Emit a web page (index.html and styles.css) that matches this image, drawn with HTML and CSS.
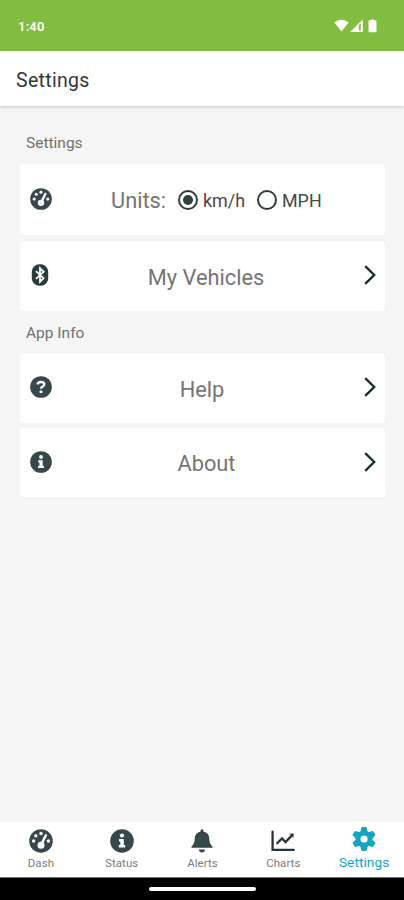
FILE: index.html
```html
<!DOCTYPE html>
<html lang="en">
<head>
<meta charset="utf-8">
<title>Settings</title>
<link rel="stylesheet" href="styles.css">
</head>
<body>
<svg class="defs" width="0" height="0" aria-hidden="true">
  <symbol id="gauge" viewBox="0 0 24 24">
    <circle cx="12" cy="12" r="11.8" fill="#37474a"/>
    <g fill="#fff"><circle cx="4.6" cy="12" r="1.7"/><circle cx="6.8" cy="6.8" r="1.7"/><circle cx="12" cy="4.5" r="1.7"/><circle cx="19.4" cy="12" r="1.7"/><circle cx="12" cy="16.2" r="3.5"/></g>
    <path d="M12 16 16.8 6.4" stroke="#fff" stroke-width="2.5" stroke-linecap="round"/>
  </symbol>
  <symbol id="info" viewBox="0 0 24 24">
    <circle cx="12" cy="12" r="11.8" fill="#37474a"/>
    <circle cx="12" cy="6.5" r="2.1" fill="#fff"/>
    <path d="M9 10h4.8v6H15.2v2.6H8.8V16h1.5v-3.4H9z" fill="#fff"/>
  </symbol>
  <symbol id="chevron" viewBox="0 0 12 20">
    <path d="M1.2 1.2 10.2 10 1.2 18.8" fill="none" stroke="#1c2f30" stroke-width="2.4"/>
  </symbol>
</svg>
<header class="status">
  <span class="time">1:40</span>
  <svg class="signals" width="44" height="14" viewBox="0 0 44 14" fill="#fff">
    <path d="M.4 3.5Q7.5-2 14.6 3.5L7.5 12.5z"/>
    <path fill-rule="evenodd" d="M16 13 28.8 .5V13zM24.8 6v5.5h2V4.5z"/>
    <path d="M37 1.3V.5h3v.8h1.5q1 0 1 1v10q0 1-1 1h-6q-1 0-1-1v-10q0-1 1-1z"/>
  </svg>
</header>
<div class="titlebar"><h1>Settings</h1></div>
<main>
  <h2>Settings</h2>
  <section class="card units">
    <svg class="lead" width="22" height="22"><use href="#gauge"/></svg>
    <div class="options">
      <span class="label">Units:</span>
      <span class="radio on"></span><span class="opt kmh">km/h</span>
      <span class="radio"></span><span class="opt mph">MPH</span>
    </div>
  </section>
  <section class="card vehicles">
    <svg class="lead" width="22" height="22" viewBox="0 0 22 22">
      <rect x="1.8" y=".2" width="16.4" height="21.6" rx="7.6" fill="#293b3d"/>
      <path d="M6 7.2 13.6 14.2 10 17.8V4.2L13.6 7.8 6 14.8" fill="none" stroke="#fff" stroke-width="1.8"/>
    </svg>
    <span class="label">My Vehicles</span>
    <svg class="go" width="12" height="20"><use href="#chevron"/></svg>
  </section>
  <h2 class="second">App Info</h2>
  <section class="card help">
    <svg class="lead" width="22" height="22" viewBox="0 0 24 24">
      <circle cx="12" cy="12" r="11.8" fill="#37474a"/>
      <path d="M8.7 9.2V7.7Q10 6.5 12.2 6.5q3.4 0 3.4 2.6 0 1.8-2 2.6-1.5.6-1.5 2.1" fill="none" stroke="#fff" stroke-width="2.7"/>
      <circle cx="12" cy="17.2" r="1.7" fill="#fff"/>
    </svg>
    <span class="label">Help</span>
    <svg class="go" width="12" height="20"><use href="#chevron"/></svg>
  </section>
  <section class="card about">
    <svg class="lead" width="22" height="22"><use href="#info"/></svg>
    <span class="label">About</span>
    <svg class="go" width="12" height="20"><use href="#chevron"/></svg>
  </section>
</main>
<nav>
  <a class="tab"><svg width="24" height="24"><use href="#gauge"/></svg><span class="dash">Dash</span></a>
  <a class="tab"><svg width="24" height="24"><use href="#info"/></svg><span class="stat">Status</span></a>
  <a class="tab"><svg width="24" height="24" viewBox="0 0 24 24" fill="#37474a"><path d="M10.6 1.6a1.4 1.4 0 0 1 2.8 0v.9q5.9 1.2 5.9 7.4 0 4.8 3.2 7.5v1.4h-21v-1.4q3.2-2.7 3.2-7.5 0-6.2 5.9-7.4zM9 20.5h6a3 3 0 0 1-6 0z"/></svg><span class="alerts">Alerts</span></a>
  <a class="tab"><svg width="24" height="24" viewBox="0 0 24 24" fill="none" stroke="#263638" stroke-width="2.3" stroke-linecap="round"><path d="M1.6 2.6v18.2H22.8M6.2 14.2 11 9.4l3.6 3.6L21.6 5.6"/><path d="M19 5.2h2.9v2.9" stroke-width="1"/></svg><span class="charts">Charts</span></a>
  <a class="tab active"><svg width="24" height="24" viewBox="-12 -12 24 24" fill="#16a3c4">
    <path fill-rule="evenodd" d="M-8.6 0A8.6 8.6 0 1 0 8.6 0A8.6 8.6 0 1 0-8.6 0M-3.6 0A3.6 3.6 0 1 1 3.6 0A3.6 3.6 0 1 1-3.6 0"/>
    <g id="teeth"><path id="tooth" d="M-3.7-6.5-2.7-11.2Q-2.5-11.9-1.8-11.9H1.8Q2.5-11.9 2.7-11.2L3.7-6.5z"/><use href="#tooth" transform="rotate(60)"/><use href="#tooth" transform="rotate(120)"/></g>
    <use href="#teeth" transform="rotate(180)"/></svg><span>Settings</span></a>
</nav>
<footer><div class="handle"></div></footer>
</body>
</html>
```
FILE: styles.css
```css
* { box-sizing: border-box; }
body { margin: 0; height: 900px; display: flex; flex-direction: column; overflow: hidden; background: #f5f5f5; color: #747474; font-family: Roboto, "Liberation Sans", sans-serif; }
svg { display: block; flex: none; }
.defs { position: absolute; }
.status { height: 51px; flex: none; background: #83bd40; display: flex; justify-content: space-between; padding: 19px 26px 0 18px; color: #fff; }
.time { font-size: 13px; line-height: 15px; font-weight: 600; letter-spacing: .2px; }
.titlebar { height: 55px; flex: none; background: #fff; padding: 17px 16px; box-shadow: 0 1px 3px #0003; }
h1 { margin: 0; font-size: 19.5px; line-height: 25px; font-weight: 450; color: #303838; letter-spacing: .3px; }
main { flex: 1; padding: 28px 19px 0 20px; }
h2 { margin: 0 0 12px 6px; height: 18px; font-size: 15.5px; line-height: 19px; font-weight: 400; color: #707070; }
.second { margin-top: 13px; line-height: 18px; }
.card { height: 69px; background: #fff; border-radius: 4px; display: grid; grid-template-columns: 22px 1fr 12px; align-items: center; padding: 0 9px 0 10px; }
.units { height: 71px; margin-bottom: 6.5px; grid-template-columns: 22px 1fr; }
.help { margin-bottom: 5.5px; }
.lead, .go { margin-top: -2px; }
.label { font-size: 21.8px; line-height: 26px; font-weight: 400; text-align: center; padding: 3px 4px 0 0; color: #757575; letter-spacing: 0; }
.help .label { padding-right: 12px; }
.about .label { padding-right: 3px; }
.options { display: flex; align-items: center; padding-left: 59px; }
.options .label { width: 67px; text-align: left; padding: 2px 0 0; }
.radio { width: 20px; height: 20px; border: 2px solid #303b3b; border-radius: 50%; flex: none; display: grid; place-items: center; }
.on::after { content: ""; width: 10px; height: 10px; border-radius: 50%; background: #30403f; }
.opt { margin-left: 5px; padding-top: 2px; font-size: 17.9px; line-height: 22px; font-weight: 400; color: #484848; }
.kmh { width: 54px; }
nav { height: 55px; flex: none; background: #fff; display: grid; grid-template-columns: repeat(5, 1fr); }
.tab { display: flex; flex-direction: column; align-items: center; padding: 7px 0 0 1px; font-size: 11.5px; line-height: 14px; font-weight: 400; color: #7c7c7c; }
.tab span { margin-top: 3px; letter-spacing: .05px; }
.active { font-size: 13.7px; color: #16a3c4; padding-top: 5px; }
.active span { margin-top: 4px; line-height: 15px; }
footer { height: 23px; flex: none; background: #000; border-top: 1px solid #777; display: flex; justify-content: center; }
.handle { margin-top: 9px; width: 107px; height: 4px; border-radius: 2px; background: #fff; }
```
